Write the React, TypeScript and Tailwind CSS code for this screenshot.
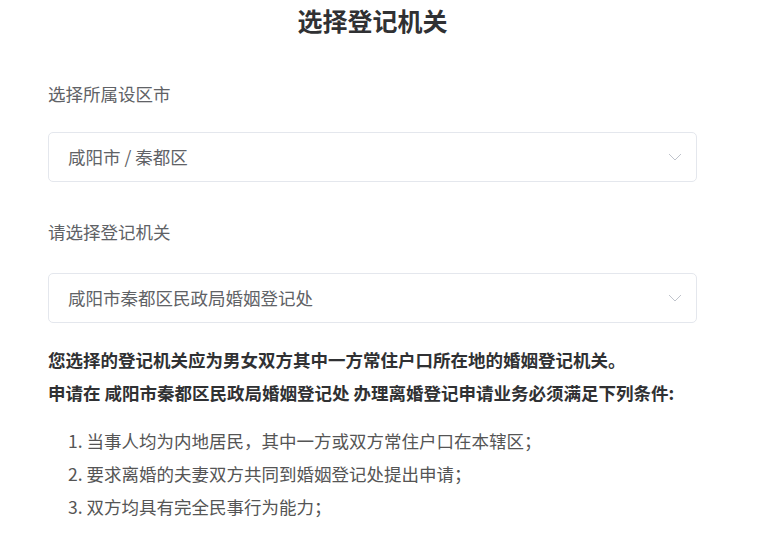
import { useState } from 'react'

const font = { fontFamily: '"Noto Sans CJK SC", "Noto Sans", sans-serif' }

const conditions = [
  '当事人均为内地居民，其中一方或双方常住户口在本辖区；',
  '要求离婚的夫妻双方共同到婚姻登记处提出申请；',
  '双方均具有完全民事行为能力；',
]

function Chevron() {
  return (
    <svg width="14" height="8" viewBox="0 0 14 8" fill="none" className="shrink-0">
      <path d="M1 1l6 6 6-6" stroke="#c0c4cc" strokeWidth="1" />
    </svg>
  )
}

function SelectBox({ value }: { value: string }) {
  return (
    <div className="h-[50px] w-full border border-[#e4e7ed] rounded-[5px] flex items-center justify-between pl-[19px] pr-[14px] bg-white">
      <span className="text-[17.5px] text-[#606266] leading-none">{value}</span>
      <Chevron />
    </div>
  )
}

export default function App() {
  const [city] = useState('咸阳市 / 秦都区')
  const [office] = useState('咸阳市秦都区民政局婚姻登记处')

  return (
    <div className="min-h-[536px] bg-white" style={font}>
      <div className="ml-[48px] w-[649px]">
        <h1 className="h-[40px] leading-[40px] text-center text-[25px] font-bold text-[#303133]">选择登记机关</h1>

        <p className="mt-[42px] h-[24px] leading-[24px] text-[17.5px] text-[#606266]">选择所属设区市</p>
        <div className="mt-[26px]">
          <SelectBox value={city} />
        </div>

        <p className="mt-[38px] h-[24px] leading-[24px] text-[17.5px] text-[#606266]">请选择登记机关</p>
        <div className="mt-[29px]">
          <SelectBox value={office} />
        </div>

        <div className="mt-[20px] text-[17.5px] font-bold text-[#303133] leading-[33px]">
          <p>您选择的登记机关应为男女双方其中一方常住户口所在地的婚姻登记机关。</p>
          <p>申请在 {office} 办理离婚登记申请业务必须满足下列条件:</p>
        </div>

        <ol className="mt-[15px] pl-[20px] text-[17.5px] text-[#555] leading-[33px]">
          {conditions.map((c, i) => (
            <li key={i}>
              {i + 1}. {c}
            </li>
          ))}
        </ol>
      </div>
    </div>
  )
}
